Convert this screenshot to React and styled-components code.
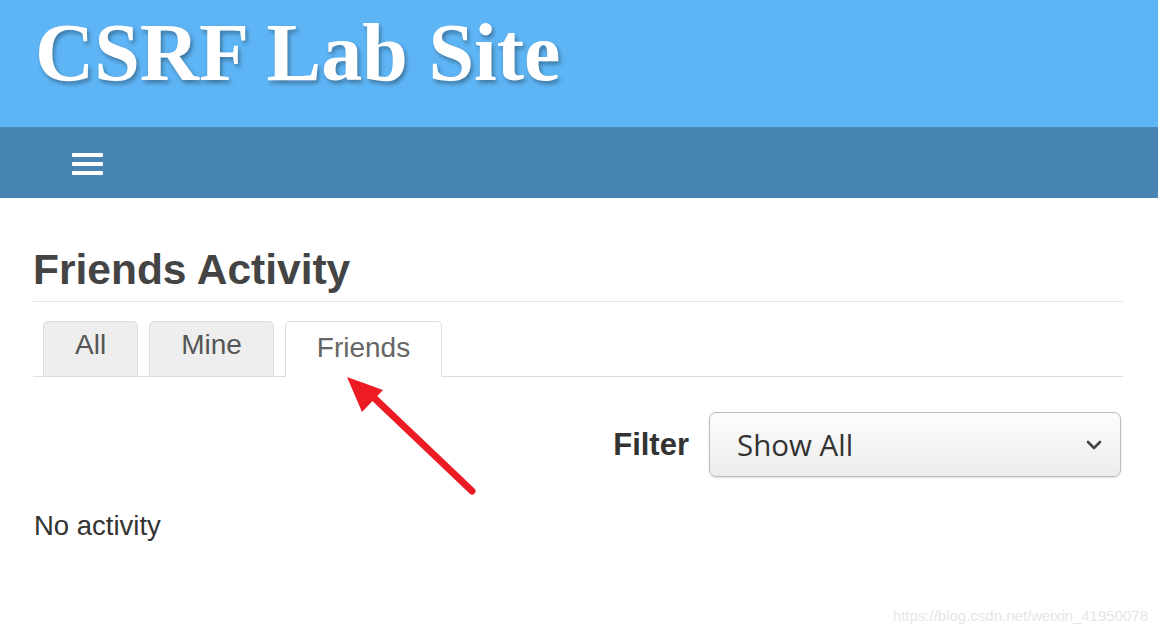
import styled, { createGlobalStyle } from "styled-components"

const GlobalStyle = createGlobalStyle`
  html, body {
    margin: 0;
    padding: 0;
    background: #fff;
    overflow: hidden;
  }
  body {
    font-family: "Liberation Sans", Arial, sans-serif;
    color: #333;
  }
`

const tabs = [
  { label: "All", active: false },
  { label: "Mine", active: false },
  { label: "Friends", active: true },
]

export default function App() {
  return (
    <Page>
      <GlobalStyle />
      <Header>
        <SiteTitle>CSRF Lab Site</SiteTitle>
      </Header>
      <NavBar>
        <MenuButton aria-label="menu">
          <Bar />
          <Bar />
          <Bar />
        </MenuButton>
      </NavBar>
      <Main>
        <PageTitle>Friends Activity</PageTitle>
        <TabList>
          {tabs.map((t) => (
            <Tab key={t.label} $active={t.active}>
              {t.label}
            </Tab>
          ))}
        </TabList>
        <FilterRow>
          <FilterLabel>Filter</FilterLabel>
          <Select>
            <span>Show All</span>
            <svg width="18" height="12" viewBox="0 0 18 12">
              <path
                d="M3 3 L9 9 L15 3"
                fill="none"
                stroke="#444"
                strokeWidth="2.6"
                strokeLinecap="round"
                strokeLinejoin="round"
              />
            </svg>
          </Select>
        </FilterRow>
        <Empty>No activity</Empty>
      </Main>
      <Arrow width="140" height="130" viewBox="0 0 140 130">
        <line x1="133" y1="122" x2="30" y2="24" stroke="#ed1c24" strokeWidth="7" strokeLinecap="round" />
        <polygon points="8,8 44,21 23,43" fill="#ed1c24" />
      </Arrow>
      <Watermark>https://blog.csdn.net/weixin_41950078</Watermark>
    </Page>
  )
}

const Page = styled.div`
  position: relative;
  width: 1158px;
  height: 634px;
  overflow: hidden;
`

const Header = styled.header`
  height: 127px;
  background: #5eb5f5;
  padding: 6px 0 0 35px;
  box-sizing: border-box;
`

const SiteTitle = styled.h1`
  margin: 0;
  font-family: "Liberation Serif", "Times New Roman", serif;
  font-weight: 700;
  font-size: 82px;
  line-height: normal;
  color: #fff;
  text-shadow: 2px 3px 4px rgba(0, 0, 0, 0.35);
`

const NavBar = styled.nav`
  height: 71px;
  background: #4785b5;
  display: flex;
  align-items: center;
  padding-left: 72px;
  box-sizing: border-box;
`

const MenuButton = styled.div`
  display: flex;
  flex-direction: column;
  gap: 5px;
  padding-top: 3px;
`

const Bar = styled.span`
  display: block;
  width: 31px;
  height: 4px;
  border-radius: 1px;
  background: #fff;
`

const Main = styled.main`
  margin: 0 35px 0 33px;
  padding-top: 49px;
`

const PageTitle = styled.h2`
  margin: 0;
  font-size: 42.5px;
  line-height: 45px;
  font-weight: 700;
  color: #444;
  padding-bottom: 9px;
  border-bottom: 1px solid #e5e5e5;
`

const TabList = styled.div`
  display: flex;
  gap: 11px;
  margin-top: 19px;
  padding-left: 10px;
  border-bottom: 1px solid #ddd;
`

const Tab = styled.div`
  height: 56px;
  box-sizing: border-box;
  margin-bottom: -1px;
  padding: ${({ $active }) => ($active ? "8px" : "5px")} 31px 0;
  font-size: 28px;
  line-height: 36px;
  color: ${({ $active }) => ($active ? "#666" : "#555")};
  background: ${({ $active }) => ($active ? "#fff" : "#eee")};
  border: 1px solid #ddd;
  border-bottom-color: ${({ $active }) => ($active ? "#fff" : "#ddd")};
  border-radius: 5px 5px 0 0;
`

const FilterRow = styled.div`
  display: flex;
  justify-content: flex-end;
  align-items: center;
  gap: 20px;
  margin-top: 35px;
  padding-right: 2px;
`

const FilterLabel = styled.label`
  font-size: 31px;
  font-weight: 700;
  color: #333;
`

const Select = styled.div`
  width: 412px;
  height: 65px;
  box-sizing: border-box;
  display: flex;
  align-items: center;
  justify-content: space-between;
  padding: 0 17px 0 27px;
  border: 1px solid #bbb;
  border-radius: 7px;
  background: linear-gradient(#fdfdfd, #ececec);
  box-shadow: 0 1px 2px rgba(0, 0, 0, 0.12);
  font-family: "Open Sans", "Noto Sans", sans-serif;
  font-size: 29.5px;
  color: #333;
`

const Empty = styled.p`
  margin: 31px 0 0 1px;
  font-size: 27.5px;
  line-height: 36px;
  color: #333;
`

const Arrow = styled.svg`
  position: absolute;
  left: 339px;
  top: 369px;
`

const Watermark = styled.div`
  position: absolute;
  right: 10px;
  bottom: 10px;
  font-size: 15px;
  color: #e6e6e6;
`
